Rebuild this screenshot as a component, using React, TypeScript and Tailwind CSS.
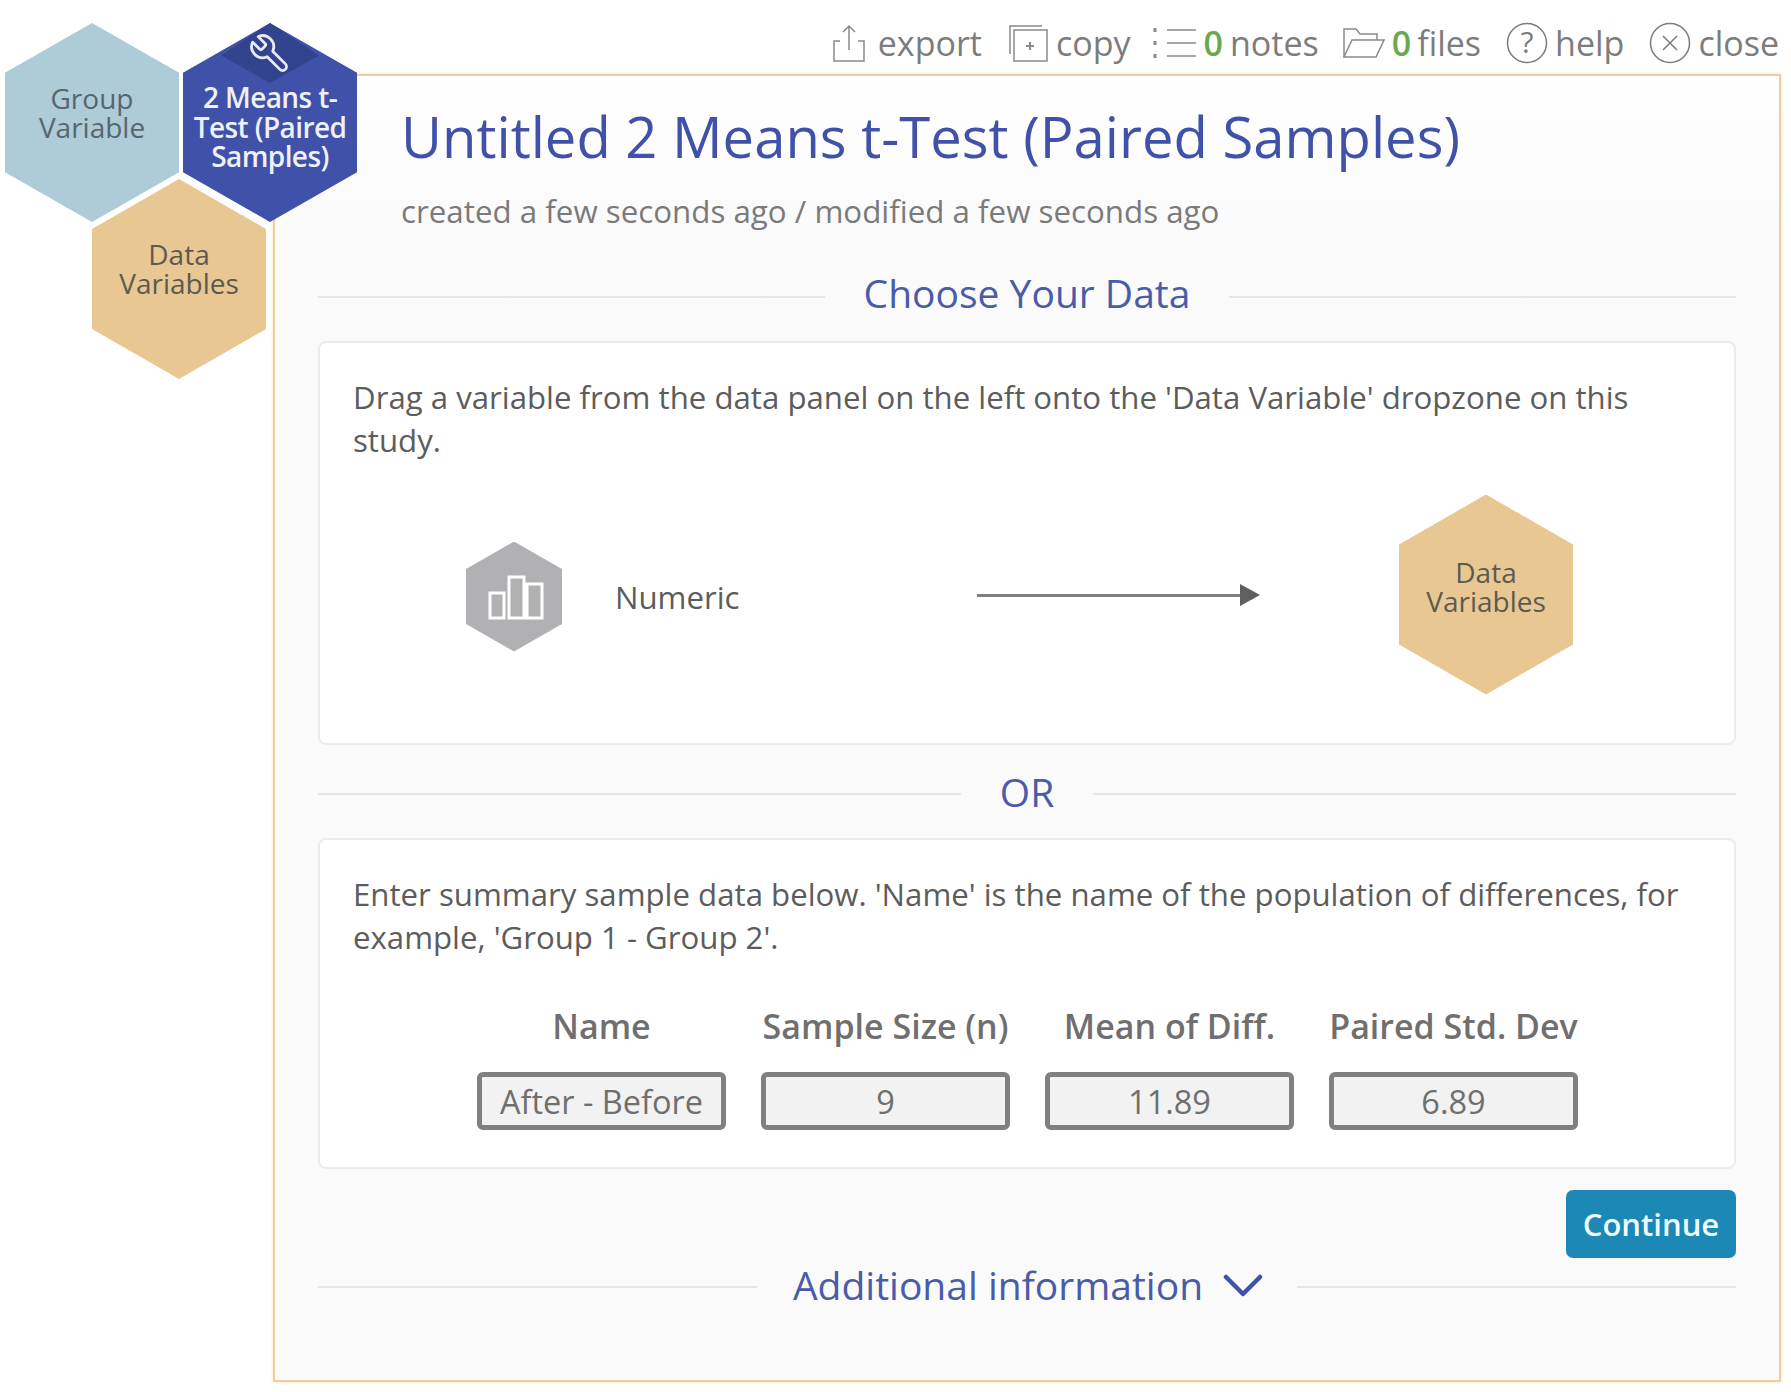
import { ReactNode } from "react"

const FONT = "font-['Open_Sans','Noto_Sans',sans-serif]"

function Hex({ className, children }: { className: string; children?: ReactNode }) {
  return (
    <div
      className={`[clip-path:polygon(50%_0,100%_25%,100%_75%,50%_100%,0_75%,0_25%)] ${className}`}
    >
      {children}
    </div>
  )
}

function Divider({ children, gap, shift = "" }: { children: ReactNode; gap: string; shift?: string }) {
  return (
    <div className={`flex items-center ${gap}`}>
      <div className="h-[2px] flex-1 bg-[#e6e6e6]" />
      <div className={`text-[39px] leading-[50px] text-[#4a5ba9] flex items-center ${shift}`}>{children}</div>
      <div className="h-[2px] flex-1 bg-[#e6e6e6]" />
    </div>
  )
}

function Field({ label, value }: { label: string; value: string }) {
  return (
    <div className="w-[249px] flex flex-col items-center">
      <div className="text-[34px] leading-[44px] font-semibold text-[#6f6f6f] whitespace-nowrap">{label}</div>
      <div className="mt-[24px] w-full h-[58px] border-[5px] border-[#808080] rounded-[6px] bg-[#f2f2f2] flex items-center justify-center text-[32.5px] text-[#6f6f6f]">
        {value}
      </div>
    </div>
  )
}

function ToolItem({ icon, count, label, gap }: { icon: ReactNode; count?: string; label: string; gap: string }) {
  return (
    <div className={`flex items-center ${gap}`}>
      {icon}
      {count && <span className="text-[34px] font-semibold text-[#6aa84f] tracking-[-1px]">{count}</span>}
      <span className="text-[34px] text-[#7c7c7c]">{label}</span>
    </div>
  )
}

export default function App() {
  return (
    <div className={`relative w-[1791px] h-[1392px] overflow-hidden bg-white ${FONT}`}>
      {/* hex navigation */}
      <Hex className="absolute left-[5px] top-[23px] w-[174px] h-[199px] bg-[#aecbd8] flex flex-col items-center pt-[61px] text-[28px] leading-[29px] text-[#56666f]">
        <div>Group</div>
        <div>Variable</div>
      </Hex>
      <Hex className="absolute left-[183px] top-[23px] w-[174px] h-[199px] bg-[#3f51a8] flex flex-col items-center pt-[60px] text-[28px] leading-[29.5px] font-semibold text-[#eef0fa] tracking-[-0.6px]">
        <div className="absolute left-[38px] top-0 w-[98px] h-[60px] bg-[#33448f] [clip-path:polygon(50%_0,100%_54%,50%_100%,0_54%)]" />
        <svg className="absolute left-[65px] top-[9px]" width="44" height="44" viewBox="0 0 24 24" fill="none" stroke="#e8ebf8" strokeWidth="1.5" strokeLinejoin="round">
          <path d="M14.7 6.3a1 1 0 0 0 0 1.4l1.6 1.6a1 1 0 0 0 1.4 0l3.77-3.77a6 6 0 0 1-7.94 7.94l-6.91 6.91a2.12 2.12 0 0 1-3-3l6.91-6.91a6 6 0 0 1 7.94-7.94z" transform="matrix(-1 0 0 1 24 0)" />
        </svg>
        <div className="relative">2 Means t-</div>
        <div className="relative">Test (Paired</div>
        <div className="relative">Samples)</div>
      </Hex>
      <Hex className="absolute left-[92px] top-[179px] w-[174px] h-[200px] bg-[#e8c793] flex flex-col items-center pt-[61px] text-[28px] leading-[29px] text-[#5d5a50]">
        <div>Data</div>
        <div>Variables</div>
      </Hex>

      {/* toolbar */}
      <div className="h-[74px] pr-[12px] pt-[12px] flex items-center justify-end">
        <ToolItem
          gap="gap-[13px]"
          label="export"
          icon={
            <svg width="32" height="38" viewBox="0 0 32 38" fill="none" stroke="#8a8a8a" strokeWidth="1.5">
              <path d="M16 26V2M10 8l6-6 6 6M7 17H1v20h30V17h-6" />
            </svg>
          }
        />
        <div className="w-[26px]" />
        <ToolItem
          gap="gap-[8px]"
          label="copy"
          icon={
            <svg width="40" height="38" viewBox="0 0 40 38" fill="none" stroke="#8a8a8a" strokeWidth="1.5">
              <path d="M2 30V2h32" />
              <path d="M6 6h33v31H6z" />
              <path d="M22 18v8M18 22h8" strokeWidth="2" />
            </svg>
          }
        />
        <div className="w-[21px]" />
        <ToolItem
          gap="gap-[8px]"
          label="notes"
          count="0"
          icon={
            <svg width="44" height="32" viewBox="0 0 44 32" fill="none" stroke="#8a8a8a" strokeWidth="1.5">
              <path d="M15 3h29M15 16h29M15 29h29" />
              <path d="M3 1v4M3 14v4M3 27v4" strokeWidth="3" />
            </svg>
          }
        />
        <div className="w-[24px]" />
        <ToolItem
          gap="gap-[7px]"
          label="files"
          count="0"
          icon={
            <svg width="42" height="30" viewBox="0 0 42 30" fill="none" stroke="#8a8a8a" strokeWidth="1.5">
              <path d="M1 29V1h12l4 5h17v6" />
              <path d="M1 29l8-17h32l-8 17z" />
            </svg>
          }
        />
        <div className="w-[25px]" />
        <ToolItem
          gap="gap-[7px]"
          label="help"
          icon={
            <svg width="42" height="42" viewBox="0 0 42 42" fill="none" stroke="#7c7c7c" strokeWidth="1.5">
              <circle cx="21" cy="21" r="19.5" />
              <text x="21" y="31" textAnchor="middle" fontSize="30" fill="#7c7c7c" stroke="none">?</text>
            </svg>
          }
        />
        <div className="w-[25px]" />
        <ToolItem
          gap="gap-[7px]"
          label="close"
          icon={
            <svg width="42" height="42" viewBox="0 0 42 42" fill="none" stroke="#7c7c7c" strokeWidth="1.5">
              <circle cx="21" cy="21" r="19.5" />
              <path d="M14 14l14 14M28 14L14 28" />
            </svg>
          }
        />
      </div>

      {/* main panel */}
      <div className="ml-[273px] mr-[10px] h-[1308px] border-2 border-[#ecd09c] shadow-[0_0_3px_#f5dfae] bg-gradient-to-b from-white to-[#fafafa] to-[12%] px-[43px]">
        <div className="pl-[83px] pt-[22px] h-[196px]">
          <div className="text-[56.2px] leading-[76px] text-[#3f51a8] whitespace-nowrap">
            Untitled 2 Means t-Test (Paired Samples)
          </div>
          <div className="mt-[16px] text-[31.3px] leading-[42px] text-[#7a7a7a] whitespace-nowrap">
            created a few seconds ago / modified a few seconds ago
          </div>
        </div>

        <Divider gap="gap-[39px]" shift="-translate-y-[4px]">Choose Your Data</Divider>

        <div className="mt-[19px] h-[404px] bg-white border-2 border-[#ebebeb] rounded-[8px] px-[33px] pt-[33px] text-[31.2px] leading-[43px] text-[#5c5c5c]">
          <p>Drag a variable from the data panel on the left onto the 'Data Variable' dropzone on this study.</p>
          <div className="mt-[33px] flex items-center h-[200px] pl-[113px]">
            <Hex className="mt-[3px] w-[96px] h-[110px] bg-[#b1b1b3] flex items-center justify-center">
              <svg className="ml-[4px]" width="56" height="46" viewBox="0 0 56 46" fill="none" stroke="#fff" strokeWidth="3">
                <path d="M2 19h14v25H2zM21 3h15v41H21zM39 10h15v34H39z" />
              </svg>
            </Hex>
            <div className="mt-[4px] ml-[53px] w-[362px]">Numeric</div>
            <div className="w-[283px] flex items-center">
              <div className="h-[3px] flex-1 bg-[#808080]" />
              <div className="w-0 h-0 border-y-[11px] border-y-transparent border-l-[20px] border-l-[#5f5f5f]" />
            </div>
            <Hex className="mb-[1px] ml-[139px] w-[174px] h-[200px] bg-[#e8c793] flex flex-col items-center pt-[63px] text-[28px] leading-[29px] text-[#5d5a50]">
              <div>Data</div>
              <div>Variables</div>
            </Hex>
          </div>
        </div>

        <Divider gap="gap-[39px] mt-[24px]" shift="-translate-y-[2px]">OR</Divider>

        <div className="mt-[19px] h-[331px] bg-white border-2 border-[#ebebeb] rounded-[8px] px-[33px] pt-[33px] text-[31.2px] leading-[43px] text-[#5c5c5c]">
          <p>Enter summary sample data below. 'Name' is the name of the population of differences, for example, 'Group 1 - Group 2'.</p>
          <div className="mt-[45px] pl-[124px] flex gap-[35px]">
            <Field label="Name" value="After - Before" />
            <Field label="Sample Size (n)" value="9" />
            <Field label="Mean of Diff." value="11.89" />
            <Field label="Paired Std. Dev" value="6.89" />
          </div>
        </div>

        <div className="mt-[21px] flex justify-end">
          <button className="w-[170px] h-[68px] rounded-[7px] bg-[#1c88b5] text-[31px] font-semibold text-[#eefbff]">
            Continue
          </button>
        </div>

        <Divider gap="gap-[35px] mt-[4px]" shift="-translate-y-[2px] translate-x-[1px]">
          Additional information
          <svg className="ml-[20px]" width="40" height="24" viewBox="0 0 40 24" fill="none" stroke="#3f51a8" strokeWidth="4.5" strokeLinecap="round" strokeLinejoin="round">
            <path d="M3 4l17 17L37 4" />
          </svg>
        </Divider>
      </div>
    </div>
  )
}
